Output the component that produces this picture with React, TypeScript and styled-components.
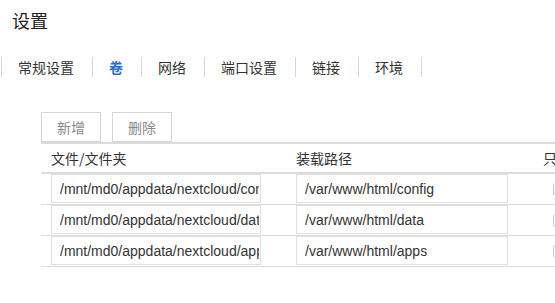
import React from "react";
import styled, { createGlobalStyle } from "styled-components";

const Global = createGlobalStyle`
  html, body { margin: 0; padding: 0; background: #fff; overflow: hidden; }
  body { font-family: "Liberation Sans", "Noto Sans CJK SC", sans-serif; color: #333; }
`;

const Page = styled.div`
  width: 555px;
  height: 303px;
  overflow: hidden;
`;

const Title = styled.h1`
  margin: 0;
  padding: 8px 12px 0;
  font-size: 18px;
  line-height: 24px;
  font-weight: normal;
  color: #222;
  font-family: "Noto Sans CJK SC", sans-serif;
`;

const Tabs = styled.div`
  display: flex;
  margin-top: 25px;
  padding-left: 1px;
  height: 20px;
`;

const Tab = styled.div<{ $active?: boolean; $last?: boolean }>`
  border-left: 1px solid #d6d6d6;
  border-right: ${(p) => (p.$last ? "1px solid #d6d6d6" : "none")};
  padding: 0 18px 0 16px;
  font-size: 14px;
  line-height: 20px;
  font-family: "Noto Sans CJK SC", sans-serif;
  color: ${(p) => (p.$active ? "#1f6fd6" : "#333")};
  font-weight: ${(p) => (p.$active ? 700 : 400)};
`;

const Section = styled.div`
  margin-top: 35px;
  padding-left: 41px;
  width: 600px;
`;

const Toolbar = styled.div`
  display: flex;
  gap: 11px;
`;

const Button = styled.button`
  width: 60px;
  height: 30px;
  border: 1px solid #d4d4d4;
  background: #fff;
  color: #8a8a8a;
  font-size: 14px;
  font-family: "Noto Sans CJK SC", sans-serif;
  padding: 0;
`;

const Table = styled.div`
  border-top: 2px solid #dcdcdc;
`;

const Row = styled.div<{ $header?: boolean }>`
  display: grid;
  grid-template-columns: 245px 247px 1fr;
  height: ${(p) => (p.$header ? "28px" : "30px")};
  border-bottom: ${(p) => (p.$header ? "2px" : "1px")} solid #dcdcdc;
`;

const Cell = styled.div`
  padding-left: 10px;
  display: flex;
  align-items: flex-start;
`;

const HeadCell = styled(Cell)`
  align-items: center;
  font-size: 14px;
  font-family: "Noto Sans CJK SC", sans-serif;
  color: #333;
  white-space: nowrap;
`;

const CheckCell = styled(Cell)`
  align-items: center;
`;

const Input = styled.input<{ $w: number }>`
  box-sizing: border-box;
  width: ${(p) => p.$w}px;
  height: 29px;
  border: 1px solid #e0e0e0;
  padding: 0 1px 0 8px;
  font-size: 14px;
  font-family: "Liberation Sans", sans-serif;
  color: #333;
  outline: none;
  margin: 0;
`;

const Check = styled.span`
  box-sizing: border-box;
  display: block;
  width: 13px;
  height: 13px;
  margin-left: 10px;
  border: 1px solid #c4c4c4;
  border-radius: 3px;
  background: #fff;
`;

const rows = [
  { src: "/mnt/md0/appdata/nextcloud/config", dst: "/var/www/html/config" },
  { src: "/mnt/md0/appdata/nextcloud/data", dst: "/var/www/html/data" },
  { src: "/mnt/md0/appdata/nextcloud/apps", dst: "/var/www/html/apps" },
];

const tabs = ["常规设置", "卷", "网络", "端口设置", "链接", "环境"];

export default function App() {
  return (
    <Page>
      <Global />
      <Title>设置</Title>
      <Tabs>
        {tabs.map((t, i) => (
          <Tab key={t} $active={i === 1} $last={i === tabs.length - 1}>
            {t}
          </Tab>
        ))}
      </Tabs>
      <Section>
        <Toolbar>
          <Button>新增</Button>
          <Button>删除</Button>
        </Toolbar>
        <Table>
          <Row $header>
            <HeadCell>文件/文件夹</HeadCell>
            <HeadCell>装载路径</HeadCell>
            <HeadCell>只读</HeadCell>
          </Row>
          {rows.map((r) => (
            <Row key={r.dst}>
              <Cell>
                <Input $w={210} defaultValue={r.src} readOnly />
              </Cell>
              <Cell>
                <Input $w={212} defaultValue={r.dst} readOnly />
              </Cell>
              <CheckCell>
                <Check />
              </CheckCell>
            </Row>
          ))}
        </Table>
      </Section>
    </Page>
  );
}
